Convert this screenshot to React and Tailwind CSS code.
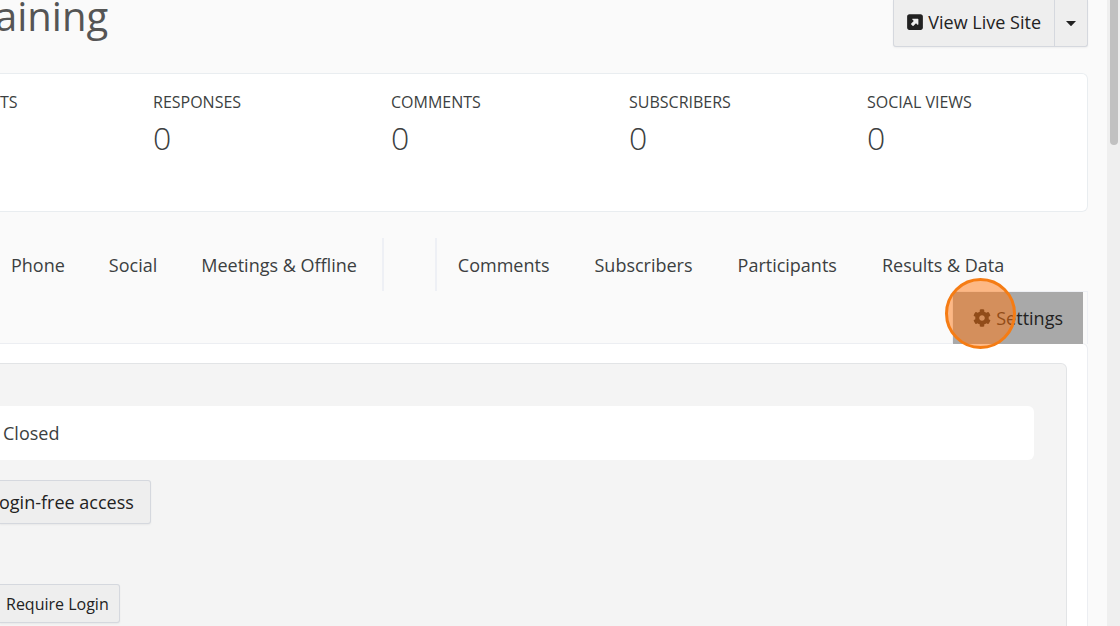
import { FaCog } from "react-icons/fa";
import { FaSquareUpRight } from "react-icons/fa6";

const stats = [
  ["TS", ""],
  ["RESPONSES", "0"],
  ["COMMENTS", "0"],
  ["SUBSCRIBERS", "0"],
  ["SOCIAL VIEWS", "0"],
];
const channels = ["Phone", "Social", "Meetings & Offline"];
const reports = ["Comments", "Subscribers", "Participants", "Results & Data"];

function Tab({ children }) {
  return (
    <a href="#" className="shrink-0 px-[22px] leading-[54px] whitespace-nowrap text-[#3c3f41]">
      {children}
    </a>
  );
}

export default function App() {
  return (
    <div className="flex h-screen overflow-hidden bg-[#fafafa] font-['Open_Sans',sans-serif] text-[18px] text-[#3c3f41]">
      <main className="min-w-0 flex-1 overflow-hidden pr-[19px]">
        <header className="flex h-[73px] items-start justify-between">
          <h1 className="-ml-[5px] -mt-[12px] text-[40px] leading-[56px] text-[#555]">aining</h1>
          <div className="flex h-[47px] rounded-b-[3px] border border-t-0 border-[#d5d8de] bg-[#eee] text-[#222] shadow-xs">
            <button className="flex items-center gap-1 border-r border-[#d5d8de] px-[13px] pb-0.5">
              <FaSquareUpRight className="size-[18px] -ml-px" />
              View Live Site
            </button>
            <button aria-label="More sites" className="flex w-[32px] items-center justify-center">
              <svg viewBox="0 0 10 5" className="h-[5px] w-[10px]" aria-hidden="true">
                <path d="M0 0h10L5.5 4.8a.7.7 0 0 1-1 0z" fill="currentColor" />
              </svg>
            </button>
          </div>
        </header>

        <section className="grid h-[139px] grid-cols-[153px_238px_238px_238px_1fr] rounded-r-md border border-l-0 border-[#e9edf0] bg-white pt-4">
          {stats.map(([label, value]) => (
            <div key={label}>
              <div className="text-[16px] leading-[24px] whitespace-nowrap">{label}</div>
              <div className="text-[32px] leading-[48px] font-light">{value}</div>
            </div>
          ))}
        </section>

        <nav className="mt-[26px]">
          <div className="flex h-[53px]">
            <div className="-ml-[11px] flex border-r-2 border-[#eef0f5] pr-[3px]">
              {channels.map((t) => <Tab key={t}>{t}</Tab>)}
            </div>
            <div className="w-[53px] border-r-2 border-[#eef0f5]" />
            <div className="-ml-px flex gap-px">
              {reports.map((t) => <Tab key={t}>{t}</Tab>)}
            </div>
          </div>
          <div className="flex h-[52px] justify-end">
            <div className="relative -mb-px border border-b-0 border-[#eef0f5] pr-1">
              <a href="#" className="flex h-full items-center gap-[5px] bg-[#a9a9a9] px-5 text-[#222]">
                <FaCog className="size-[18px]" />
                Settings
              </a>
              <span className="absolute -top-[14px] -left-2 size-[71px] rounded-full border-3 border-[#f57c14] bg-[#ff7610]/50" />
            </div>
          </div>
        </nav>

        <section className="rounded-tr-md border border-l-0 border-[#eceef2] bg-white pt-[19px] pr-5">
          <div className="min-h-[300px] rounded-tr-md border border-l-0 border-[#e2e4e6] bg-[#f4f4f4] pt-[42px] pr-8">
            <div className="rounded-r-md bg-white pl-[3px] leading-[54px]">Closed</div>
            <button className="mt-5 block h-[44px] rounded-r-[3px] border border-l-0 border-[#d5d8de] bg-[#eee] pr-4 text-[#222] shadow-xs">
              <span className="-ml-px">ogin-free access</span>
            </button>
            <button className="mt-[60px] block h-[39px] rounded-r-[3px] border border-l-0 border-[#d5d8de] bg-[#eee] pr-[10px] pl-[6px] text-[16px] text-[#222] shadow-xs">
              Require Login
            </button>
          </div>
        </section>
      </main>
      <div className="flex w-[13px] justify-center bg-[#efefef]">
        <div className="h-[145px] w-2 rounded-b-full bg-[#c1c1c1]" />
      </div>
    </div>
  );
}
